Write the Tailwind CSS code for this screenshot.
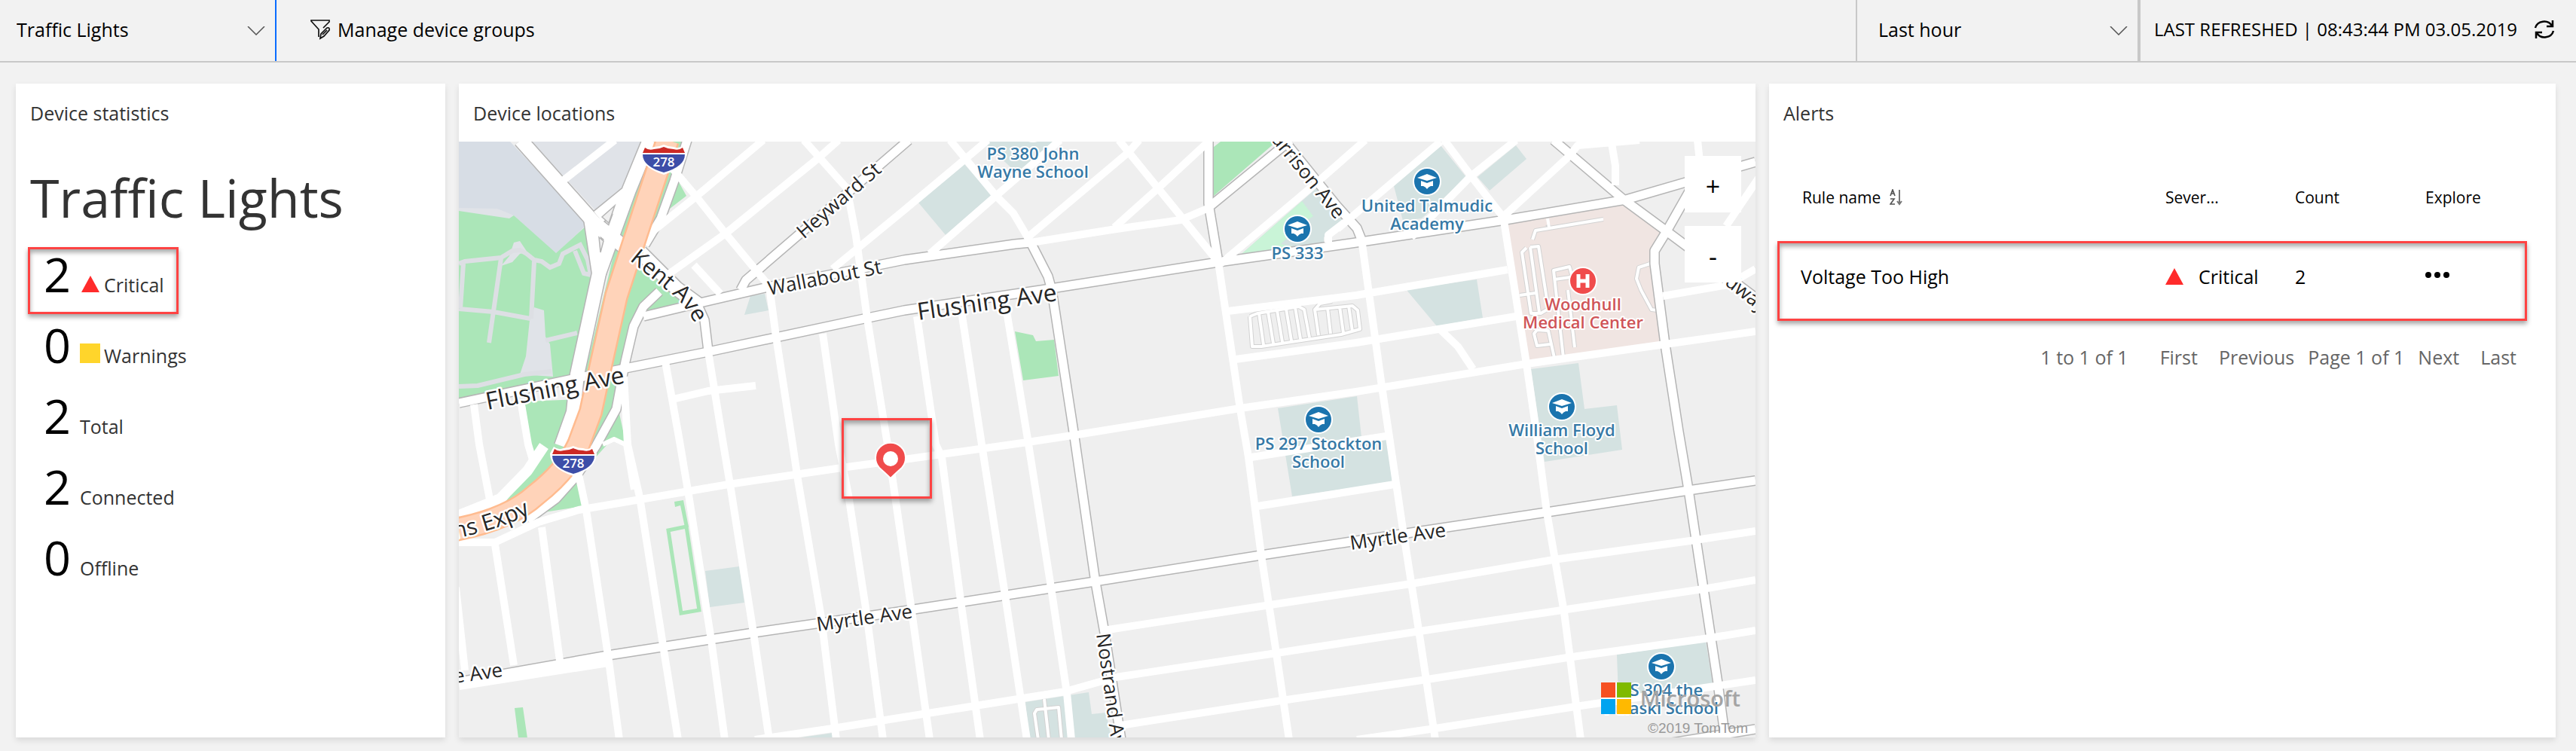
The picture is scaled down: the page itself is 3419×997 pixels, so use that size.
<!DOCTYPE html>
<html lang="en">
<head>
<meta charset="utf-8">
<title>Dashboard</title>
<script src="https://cdn.jsdelivr.net/npm/@tailwindcss/browser@4"></script>
</head>
<body class="flex min-h-screen flex-col bg-[#f2f2f2] font-['Open_Sans','Noto_Sans',sans-serif] text-[25px] leading-8 text-black">
<header class="flex h-[83px] items-stretch border-b-2 border-[#c8c8c8]">
  <div class="relative flex w-[367px] items-center border-r-2 border-[#0a6cff]">
    <select aria-label="Device group" class="h-full w-full appearance-none bg-transparent pb-1 pl-[22px]"><option>Traffic Lights</option></select>
    <svg class="pointer-events-none absolute right-[13px] h-3 w-6" viewBox="0 0 24 12" fill="none" stroke="#555" stroke-width="1.5"><path d="M1 0 12 11 23 0"/></svg>
  </div>
  <button class="ml-[45px] flex items-center gap-2 pb-1">
    <svg class="h-7 w-7" viewBox="0 0 28 28" fill="none" stroke="#111" stroke-width="1.7"><path d="M11 24V14L1 3V2H25V4L17 12"/><path d="M13 26 14 20 22 12Q26 11 25 15L18 23Z"/><path d="M16 21 22 15"/></svg>
    Manage device groups
  </button>
  <div class="relative ml-auto flex w-[378px] items-center border-r-4 border-l-2 border-[#c8c8c8]">
    <select aria-label="Time range" class="h-full w-full appearance-none bg-transparent pb-1 pl-7"><option>Last hour</option></select>
    <svg class="pointer-events-none absolute right-[13px] h-3 w-6" viewBox="0 0 24 12" fill="none" stroke="#555" stroke-width="1.5"><path d="M1 0 12 11 23 0"/></svg>
  </div>
  <div class="flex w-[578px] items-center justify-between pr-7 pb-1 pl-[18px]">
    <span class="text-2xl whitespace-nowrap">LAST REFRESHED | 08:43:44 PM 03.05.2019</span>
    <button aria-label="Refresh"><svg class="h-7 w-7" viewBox="0 0 28 28" fill="none" stroke="#000" stroke-width="2.5"><path d="M2 12A12 11 0 0 1 24 9M25 2V10H17M26 16A12 11 0 0 1 4 19M3 26V18H11"/></svg></button>
  </div>
</header>

<main class="grid flex-1 grid-cols-[570fr_1721fr_1044fr] gap-[18px] pt-7 pr-[27px] pb-[18px] pl-[21px]">
  <section class="bg-white shadow-[0_4px_8px_rgba(0,0,0,0.1)]">
    <h2 class="flex h-[77px] items-center px-[19px] text-[#333]">Device statistics</h2>
    <h1 class="mt-6 px-[19px] text-[70px] leading-[100px] text-[#333]">Traffic Lights</h1>
    <ul class="mt-4 ml-4">
      <li class="mb-[5px] flex h-[89px] w-[200px] items-baseline border-3 border-[#ff4343] pl-[18px] text-[#333] shadow-[0_4px_6px_rgba(0,0,0,0.35),inset_0_4px_6px_rgba(0,0,0,0.35)]"><span class="w-[50px] text-[63px] leading-[66px] text-black">2</span><svg class="mr-[6px] h-[22px] w-6" viewBox="0 0 24 22"><path fill="#ff2b2b" d="M12 0 24 22H0Z"/></svg>Critical</li>
      <li class="mb-[5px] flex h-[89px] items-baseline border-3 border-transparent pl-[18px] text-[#333]"><span class="w-[48px] text-[63px] leading-[66px] text-black">0</span><svg class="mr-[5px] h-[26px] w-[27px]" viewBox="0 0 27 26"><path fill="#ffd52b" d="M0 0H27V26H0Z"/></svg>Warnings</li>
      <li class="mb-[5px] flex h-[89px] items-baseline border-3 border-transparent pl-[18px] text-[#333]"><span class="w-[48px] text-[63px] leading-[66px] text-black">2</span>Total</li>
      <li class="mb-[5px] flex h-[89px] items-baseline border-3 border-transparent pl-[18px] text-[#333]"><span class="w-[48px] text-[63px] leading-[66px] text-black">2</span>Connected</li>
      <li class="flex h-[89px] items-baseline border-3 border-transparent pl-[18px] text-[#333]"><span class="w-[48px] text-[63px] leading-[66px] text-black">0</span>Offline</li>
    </ul>
  </section>

  <section class="flex flex-col bg-white shadow-[0_4px_8px_rgba(0,0,0,0.1)]">
    <h2 class="flex h-[77px] items-center px-[19px] text-[#333]">Device locations</h2>
    <div class="relative flex-1 overflow-hidden bg-[#efefef]">
      <svg class="absolute inset-0 h-full w-full" viewBox="609 188 1721 791" preserveAspectRatio="xMidYMid slice" role="img" aria-label="Street map">
        <defs>
          <g id="school"><circle r="19" fill="#fff"/><circle r="17" fill="#1b74ae"/><path fill="#fff" d="M-13-5 0-10 13-5 0-1ZM-8-1 0 2 8-1V6H5Q2 7 0 10-2 7-5 6H-8Z"/></g>
          <g id="shield"><path fill="#fff" d="M-26-19Q-20-14-13-17-6-17 0-20 6-17 13-17 20-14 26-19L31-10Q31 10 0 20-31 10-31-10Z"/><path fill="#cc2a25" d="M-25-16Q-20-12-13-14-6-14 0-17 6-14 13-14 20-12 25-16L28-9H-28Z"/><path fill="#3d4ea8" d="M-28-7H28Q28 9 0 17-28 9-28-7Z"/><text y="9" text-anchor="middle" font-size="17" font-weight="600" fill="#fff">278</text></g>
          <path id="kent" d="M835 345Q862 367 887 387 914 406 932 450"/>
          <path id="expy" d="M560 722Q650 710 704 682"/>
          <g id="major">
            <path d="M854 420 925 403 1019 381 1136 358 1200 345 1347 324 1368 322"/>
            <path d="M609 535 765 502 940 467 1147 423 1200 412 1395 383 1617 348 1800 322 1998 292 2158 265 2330 215"/>
            <path d="M983 385 990 372 1206 186"/>
            <path d="M1368 322 1391 367 1396 385 1426 580 1454 773 1466 840 1485 963 1488 982"/>
            <path d="M1604 186V270L1617 348M1602 277 1713 186"/>
            <path d="M1704 186 1774 273 1801 303 1807 318"/>
            <path d="M2062 186 2155 265 2212 307 2330 395"/>
            <path d="M2250 240 2212 307 2196 333V350L2210 457 2228 573 2241 650 2280 907 2290 982"/>
            <path d="M609 905 807 870 1000 840 1200 811 1453 772 1674 737 1800 718 2053 680 2241 651 2330 638"/>
            <path d="M2219 986 2330 968"/>
            <path d="M925 403 935 425 940 466"/>
            <path d="M912 186 895 240 877 290 856 325"/>
            <path d="M875 387 854 407 841 433 830 480 826 500 818 543 791 592 765 632 738 662 700 690"/>
          </g>
          <g id="wide">
            <path d="M691 186 789 296 830 329"/>
            <path d="M784 290 795 363 766 497 761 547 745 592"/>
            <path d="M862 186 835 252 814 310 795 363M832 257 794 288"/>
            <path d="M850 335 898 383 928 405"/>
          </g>
        </defs>

        <path fill="#efefef" d="M609 188H2330V979H609Z"/>
        <path fill="#d7dde5" d="M609 188H677L780 297 738 337 682 286 609 277Z"/>
        <path fill="#e0e3e8" d="M705 188H852L826 248 790 279Z"/>
        <path fill="#abe6b8" d="M609 278 682 286 738 336 780 298 789 363 764 500 609 533Z"/>
        <path fill="#abe6b8" d="M862 188H905L900 240 911 260 889 277 850 330 880 384 905 388 902 403 862 413 840 430 826 487 820 540 831 590 815 580 770 630 774 672 722 680 660 680 709 617 696 533 768 530 822 307Z"/>
        <path fill="#e0e3e8" d="M609 276 660 277 682 286 676 290 609 280ZM709 408 722 412 724 447 730 457 734 500 690 497 698 473 703 425ZM676 340 682 322 690 320 700 335 690 337 680 348 665 353Z"/>
        <g fill="none" stroke="#dddfe4" stroke-width="6">
          <path d="M609 350 617 347 665 342 680 333 690 332 699 337 709 345 719 347 730 355 742 350 747 337 770 325 780 345 784 365 775 363 763 333"/>
          <path d="M615 350 611 410M665 343 655 413 649 455M709 347 705 423M609 410 655 414 704 423M724 452 766 442M609 513 634 512 696 497 732 493"/>
        </g>
        <g fill="#d4e2e1">
          <path d="M996 393 1015 390 1020 412 988 418ZM1305 188H1397L1352 232ZM1280 218 1316 259 1255 312 1219 269ZM1747 250 1782 292 1757 315V323L1648 337Z"/>
          <path d="M1912 193 1946 235 1887 290 1862 293 1850 247ZM2012 193 2026 211 1977 253 1961 235ZM1866 384 1960 371 1968 422 1907 433ZM2032 490 2095 482 2103 543 2146 538 2153 597 2050 613Z"/>
          <path d="M1696 542 1801 526 1807 580 1840 580 1848 640 1715 659ZM2146 869 2264 852 2273 907 2148 925ZM936 758 981 752 988 800 942 806ZM1063 979 1105 973 1107 980ZM1361 932 1445 919 1449 948 1468 946 1475 980H1366Z"/>
        </g>
        <path fill="#c9f4d7" d="M1728 267 1743 287 1732 294 1700 324 1720 328 1648 337Z"/>
        <path fill="#abe6b8" d="M1611 195 1620 188H1694L1611 260ZM1347 440 1371 445 1375 453 1399 451 1405 499 1358 505ZM683 940 694 939 700 980H688ZM895 666 907 664 914 700 909 700 903 671 896 673Z"/>
        <path fill="none" stroke="#abe6b8" stroke-width="5" d="M887 704 911 699 928 810 904 814Z"/>
        <path fill="#f0e5e2" d="M2001 297 2158 272 2203 308 2189 333 2204 455 2030 479Z"/>

        <g fill="none" stroke-linejoin="round">
          <g stroke="#d2d2d2" stroke-width="6">
            <path d="M1659 420 1669 416 1724 407 1731 411 1738 448M1659 420 1662 460H1674L1780 444 1805 437 1802 412 1795 406 1745 411 1750 445M1671 416 1677 458M1683 414 1690 456M1695 412 1702 454M1707 410 1714 452M1719 408 1726 450M1762 409 1766 443M1778 407 1783 442M1790 406 1795 440M1745 411 1752 403 1768 400"/>
            <path d="M2128 291 2038 306 2034 318M2054 298 2056 302M2031 328 2042 327 2055 410 2045 416 2032 416 2020 335 2026 329M2031 328 2043 415M2017 392 2038 389"/>
            <path d="M2075 475 2062 359 2083 354 2087 368M2063 371 2084 368M2081 385 2090 461M2063 475 2055 439 2040 438 2036 443 2040 459 2057 457M2190 350 2175 355 2172 370 2178 385 2192 411 2200 412"/>
            <path d="M1386 928 1392 982M1378 982 1373 947 1376 942 1405 939 1409 982"/>
          </g>
          <g stroke="#fff" stroke-width="4">
            <path d="M1659 420 1669 416 1724 407 1731 411 1738 448M1659 420 1662 460H1674L1780 444 1805 437 1802 412 1795 406 1745 411 1750 445M1671 416 1677 458M1683 414 1690 456M1695 412 1702 454M1707 410 1714 452M1719 408 1726 450M1762 409 1766 443M1778 407 1783 442M1790 406 1795 440M1745 411 1752 403 1768 400"/>
            <path d="M2128 291 2038 306 2034 318M2054 290 2056 302M2031 328 2042 327 2055 410 2045 416 2032 416 2020 335 2026 329M2031 328 2043 415M2017 392 2038 389"/>
            <path d="M2075 475 2062 359 2083 354 2087 368M2063 371 2084 368M2081 385 2090 461M2063 475 2055 439 2040 438 2036 443 2040 459 2057 457M2190 350 2175 355 2172 370 2178 385 2192 411 2200 412"/>
            <path d="M1386 928 1392 982M1378 982 1373 947 1376 942 1405 939 1409 982"/>
          </g>
        </g>

        <g fill="none" stroke="#b5b5b5" stroke-linejoin="round">
          <use href="#major" stroke-width="14"/>
          <use href="#wide" stroke-width="21"/>
        </g>
        <g fill="none" stroke="#fff" stroke-width="10" stroke-linejoin="round">
          <path d="M629 537 636 590 650 663M657 723 682 883M692 537 701 590 709 617M719 700 743 877M768 630 778 677 807 870 822 982M605 780 617 890M828 500 833 590 849 660 881 863 900 982M883 480 901 580 914 657 944 850 962 982M940 467 960 590 969 643 1000 840 1021 982"/>
          <path d="M1067 186 1124 250 1136 313 1151 423 1178 590 1208 797 1234 982M1021 380 1030 447 1052 590 1059 637 1090 820 1110 982M1092 443 1113 590 1126 657 1149 807 1172 982M1217 420 1242 590 1250 607 1275 797 1301 982M1276 413 1303 590 1334 790 1363 982M1336 413 1364 583 1395 780 1416 920 1422 982"/>
          <path d="M1617 348 1646 543 1657 607 1674 737 1694 867 1711 982M1807 317 1834 513 1844 580 1862 703 1884 843 1905 982M1996 293 2026 483 2039 573 2053 680 2076 813 2098 982"/>
          <path d="M1630 413 1800 392 2001 358M1640 477 1800 455 2012 420M609 720H657L715 693 768 677 967 643 1124 620 1200 610 1364 587 1430 577 1646 542 1800 520 2026 483 2210 457 2330 440M2207 393 2294 378 2330 357"/>
          <path d="M1661 607 1846 578M1669 672 1851 643M1464 837 1686 803 1873 775 2062 743 2250 717 2330 705M1002 982 1105 967 1231 947 1414 918 1481 899 1694 867 1884 838 2073 810 2260 782 2330 770M1487 963 1701 930 1894 902 2080 873 2269 847 2330 837M1801 982 1905 967 2091 938 2283 910 2330 903"/>
          <path d="M860 312 925 260 1013 186M883 367 963 310 1086 210 1113 186M885 215 925 262 963 310 1021 380M921 352 956 390M1105 357 1200 279 1280 212 1311 186M1234 337 1322 260 1407 186M1364 315 1498 202 1512 186M1479 302 1537 250 1606 186M1261 186 1322 260 1345 283 1368 322"/>
          <path d="M1368 322 1475 305 1567 292 1602 277M1485 186 1617 348M1620 350 1747 243 1812 186M1763 322V312L1785 295M1775 304 1912 188M1873 315 1951 235 2012 186M1998 285 2083 207 2094 193 2176 186M1917 186 1955 237 1998 292M2139 190 2144 220V246M2253 186 2256 215M2335 235 2291 300M1912 438 1935 460 1955 490M893 530 940 519 1003 512M816 186 747 240"/>
          <path d="M609 908 807 877" stroke-width="16"/>
          <path d="M722 592 700 625 664 662 609 684" stroke-width="14"/>
          <path d="M800 590 815 583 830 590 840 650" stroke-width="6"/>
        </g>
        <g fill="none" stroke="#fff" stroke-linejoin="round">
          <use href="#major" stroke-width="11"/>
          <use href="#wide" stroke-width="18"/>
        </g>
        <path fill="#efefef" stroke="#b5b5b5" stroke-width="1.5" d="M799 288 816 273 808 296ZM795 315 801 320 797 335Z"/>
        <g fill="none" stroke-linejoin="round">
          <path stroke="#ffbb8f" stroke-width="32" d="M886 186 868 240 845 310 818 393 797 487 784 547 768 590Q752 625 711 657 675 690 600 704"/>
          <path stroke="#ffd3b9" stroke-width="27" d="M886 186 868 240 845 310 818 393 797 487 784 547 768 590Q752 625 711 657 675 690 600 704"/>
        </g>

        <use href="#shield" x="881" y="212"/>
        <use href="#shield" x="761" y="612"/>
        <g fill="#262626" stroke="#fff" stroke-width="5" stroke-linejoin="round" paint-order="stroke" font-size="26">
          <text transform="translate(1067 318) rotate(-41)">Heyward St</text>
          <text transform="translate(1021 392) rotate(-11)">Wallabout St</text>
          <text font-size="30"><textPath href="#kent">Kent Ave</textPath></text>
          <text font-size="32" transform="translate(647 544) rotate(-11)">Flushing Ave</text>
          <text font-size="32" transform="translate(1219 425) rotate(-8)">Flushing Ave</text>
          <text transform="translate(1773 292) rotate(51)" text-anchor="end">Harrison Ave</text>
          <text transform="translate(1085 838) rotate(-8)">Myrtle Ave</text>
          <text transform="translate(1793 730) rotate(-8)">Myrtle Ave</text>
          <text transform="translate(668 898) rotate(-8)" text-anchor="end">Myrtle Ave</text>
          <text transform="translate(1455 842) rotate(82)">Nostrand Ave</text>
          <text transform="translate(2338 416) rotate(38)" text-anchor="end">Broadway</text>
          <text font-size="30"><textPath href="#expy" startOffset="100%" text-anchor="end">Queens Expy</textPath></text>
        </g>
        <g fill="#3679a6" stroke="#fff" stroke-width="4" stroke-linejoin="round" paint-order="stroke" font-size="22" font-weight="600" text-anchor="middle">
          <text x="1371" y="212">PS 380 John</text><text x="1371" y="236">Wayne School</text>
          <text x="1722" y="344">PS 333</text>
          <text x="1894" y="281">United Talmudic</text><text x="1894" y="305">Academy</text>
          <text x="1750" y="597">PS 297 Stockton</text><text x="1750" y="621">School</text>
          <text x="2073" y="579">William Floyd</text><text x="2073" y="603">School</text>
          <text x="2205" y="924">PS 304 the</text><text x="2205" y="948">Pulaski School</text>
          <g fill="#cf5457"><text x="2101" y="412">Woodhull</text><text x="2101" y="436">Medical Center</text></g>
        </g>
        <use href="#school" x="1371" y="170"/>
        <use href="#school" x="1722" y="304"/>
        <use href="#school" x="1894" y="241"/>
        <use href="#school" x="1750" y="557"/>
        <use href="#school" x="2073" y="540"/>
        <use href="#school" x="2205" y="885"/>
        <circle cx="2101" cy="373" r="19" fill="#fff"/><circle cx="2101" cy="373" r="17" fill="#f04b4b"/><path d="M2095 364V382M2107 364V382M2095 373H2107" stroke="#fff" stroke-width="5"/>
        <path fill="#f04b4b" stroke="#fff" stroke-width="2" d="M1182 635Q1176 629 1167 621A20 20 0 1 1 1197 621Q1188 629 1182 635Z"/><circle cx="1182" cy="609" r="10" fill="#fff"/>
      </svg>
      <div class="absolute top-[367px] left-[508px] h-[107px] w-[120px] border-3 border-[#ff4343] shadow-[0_4px_6px_rgba(0,0,0,0.35),inset_0_4px_6px_rgba(0,0,0,0.35)]"></div>
      <div class="absolute top-[19px] right-[19px] flex flex-col gap-[18px]">
        <button aria-label="Zoom in" class="h-[75px] w-[75px] bg-white pt-1 text-[34px]">+</button>
        <button aria-label="Zoom out" class="h-[75px] w-[75px] bg-white pt-1 text-[34px]">-</button>
      </div>
      <div class="absolute right-5 bottom-[31px] flex items-center gap-3">
        <svg class="h-[42px] w-[40px]" viewBox="0 0 40 42"><path fill="#fff" fill-opacity=".8" d="M0 0H40V42H0Z"/><path fill="#f65022" d="M0 0H19V20H0Z"/><path fill="#7fba00" d="M21 0H40V20H21Z"/><path fill="#00a4f0" d="M0 22H19V42H0Z"/><path fill="#ffb900" d="M21 22H40V42H21Z"/></svg>
        <span class="text-[29px] leading-[42px] font-semibold text-[#a4a4a4]">Microsoft</span>
      </div>
      <span class="absolute right-[10px] bottom-0 font-['Liberation_Sans',sans-serif] text-[19px] leading-[24px] text-[#999]">©2019 TomTom</span>
    </div>
  </section>

  <section class="bg-white shadow-[0_4px_8px_rgba(0,0,0,0.1)]">
    <h2 class="flex h-[77px] items-center px-[19px] text-[#333]">Alerts</h2>
    <div class="relative mr-[38px] ml-[11px]">
      <table class="w-full table-fixed text-left">
        <colgroup><col><col class="w-[172px]"><col class="w-[173px]"><col class="w-[135px]"></colgroup>
        <thead>
          <tr class="h-[132px] text-[21px]">
            <th scope="col" class="pt-4 pl-[33px] font-normal"><span class="flex items-center gap-3">Rule name
              <svg class="h-[22px] w-[18px]" viewBox="0 0 18 22" fill="none" stroke="#555" stroke-width="1.7"><path d="M1 9 4 1 7 9M2 6H6M1 13H6L1 20H7"/><path stroke="#777" stroke-width="2" d="M13 1V20M10 16 13 20 16 16"/></svg></span></th>
            <th scope="col" class="pt-4 font-normal">Sever...</th>
            <th scope="col" class="pt-4 font-normal">Count</th>
            <th scope="col" class="pt-4 font-normal">Explore</th>
          </tr>
        </thead>
        <tbody>
          <tr class="h-[106px]">
            <td class="pb-3 pl-[31px]">Voltage Too High</td>
            <td class="pb-3"><span class="flex items-center gap-5"><svg class="h-[22px] w-6" viewBox="0 0 24 22"><path fill="#ff2b2b" d="M12 0 24 22H0Z"/></svg>Critical</span></td>
            <td class="pb-3">2</td>
            <td class="pb-4"><button aria-label="Explore alert" class="flex"><svg class="h-2 w-8" viewBox="0 0 32 8"><circle cx="4" cy="4" r="4"/><circle cx="16" cy="4" r="4"/><circle cx="28" cy="4" r="4"/></svg></button></td>
          </tr>
        </tbody>
      </table>
      <div class="pointer-events-none absolute inset-x-0 bottom-0 h-[106px] border-3 border-[#ff4343] shadow-[0_4px_6px_rgba(0,0,0,0.35),inset_0_4px_6px_rgba(0,0,0,0.35)]"></div>
    </div>
    <nav aria-label="Pagination" class="mt-8 flex justify-end pr-[52px] text-[#666]">
      <span class="mr-[42px]">1 to 1 of 1</span>
      <button class="mr-7">First</button>
      <button class="mr-[18px]">Previous</button>
      <span class="mr-[18px]">Page 1 of 1</span>
      <button class="mr-7">Next</button>
      <button>Last</button>
    </nav>
  </section>
</main>
</body>
</html>
